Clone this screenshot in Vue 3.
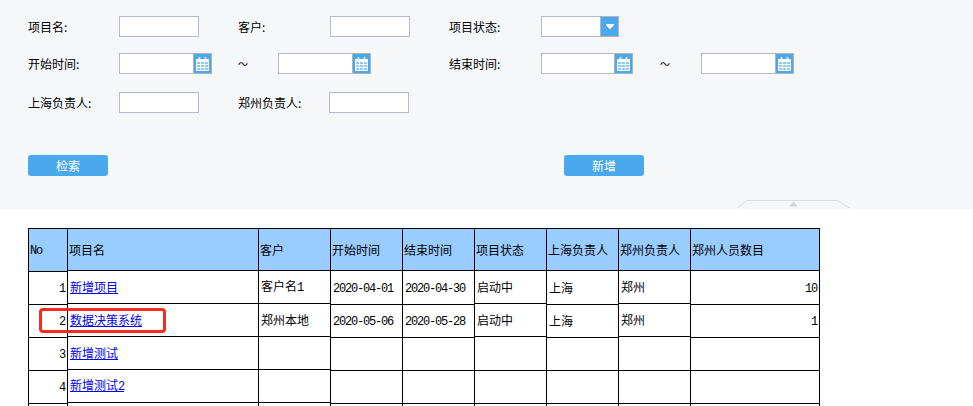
<script setup>
const rowsData = [
  ['1', '新增项目', '客户名1', '2020-04-01', '2020-04-30', '启动中', '上海', '郑州', '10'],
  ['2', '数据决策系统', '郑州本地', '2020-05-06', '2020-05-28', '启动中', '上海', '郑州', '1'],
  ['3', '新增测试', '', '', '', '', '', '', ''],
  ['4', '新增测试2', '', '', '', '', '', '', ''],
  ['', '', '', '', '', '', '', '', '']
]
const heads = [
  { title: 'No', width: 39, lines: [271, 304, 337, 370, 403], kind: 'num' },
  { title: '项目名', width: 191, lines: [270, 303, 336, 369, 402], kind: 'link' },
  { title: '客户', width: 72, lines: [270, 303, 336, 369, 402] },
  { title: '开始时间', width: 72, lines: [270, 304, 337, 370, 403] },
  { title: '结束时间', width: 72, lines: [270, 304, 337, 370, 403] },
  { title: '项目状态', width: 72, lines: [270, 303, 336, 370, 403] },
  { title: '上海负责人', width: 72, lines: [270, 304, 337, 370, 403] },
  { title: '郑州负责人', width: 72, lines: [270, 303, 336, 370, 403] },
  { title: '郑州人员数目', width: 130, lines: [270, 304, 337, 370, 403], kind: 'num', last: true }
]
const columns = heads.map((h, c) => {
  let start = 229
  const cells = [h.title, ...rowsData.map((r) => r[c])].map((text, i) => {
    const end = h.lines[i]
    const height = end === undefined ? 20 : end + 1 - start
    start = end === undefined ? start : end + 1
    return { text, height, isHead: i === 0, open: end === undefined }
  })
  return { ...h, cells }
})
const runs = (text) => text.match(/[\x00-\x7f]+|[^\x00-\x7f]+/g) || []
const isLatin = (t) => /^[\x00-\x7f]/.test(t)
</script>

<template>
  <div class="page">
    <section class="panel">
      <div class="row">
        <span class="label l91">项目名:</span>
        <span class="input after39"></span>
        <span class="label l92">客户:</span>
        <span class="input after39"></span>
        <span class="label l92">项目状态:</span>
        <span class="select">
          <span class="field"></span>
          <span class="drop">
            <svg width="10" height="6" viewBox="0 0 10 6"><path d="M1 0h8v1.5H8v1.2H7v1.2H6V5H4V3.9H3V2.7H2V1.5H1z" fill="#fff" /></svg>
          </span>
        </span>
      </div>
      <div class="row second">
        <span class="label l91">开始时间:</span>
        <span class="date after26">
          <span class="field"></span>
          <span class="cal"><svg width="13" height="14" viewBox="0 0 13 14"><path d="M0.5 2.5h12v11h-12z" fill="#8fc9f2" stroke="#fff" /><path d="M0 2h13v3H0z" fill="#fff" /><path d="M3.5 0v3M9.5 0v3" stroke="#fff" stroke-width="1.4" /><path d="M1 7.5h11M1 10.5h11M4.5 5v8M8.5 5v8" stroke="#fff" /></svg></span>
        </span>
        <span class="tilde t40">～</span>
        <span class="date after78">
          <span class="field"></span>
          <span class="cal"><svg width="13" height="14" viewBox="0 0 13 14"><path d="M0.5 2.5h12v11h-12z" fill="#8fc9f2" stroke="#fff" /><path d="M0 2h13v3H0z" fill="#fff" /><path d="M3.5 0v3M9.5 0v3" stroke="#fff" stroke-width="1.4" /><path d="M1 7.5h11M1 10.5h11M4.5 5v8M8.5 5v8" stroke="#fff" /></svg></span>
        </span>
        <span class="label l92">结束时间:</span>
        <span class="date narrow after27">
          <span class="field"></span>
          <span class="cal"><svg width="13" height="14" viewBox="0 0 13 14"><path d="M0.5 2.5h12v11h-12z" fill="#8fc9f2" stroke="#fff" /><path d="M0 2h13v3H0z" fill="#fff" /><path d="M3.5 0v3M9.5 0v3" stroke="#fff" stroke-width="1.4" /><path d="M1 7.5h11M1 10.5h11M4.5 5v8M8.5 5v8" stroke="#fff" /></svg></span>
        </span>
        <span class="tilde t41">～</span>
        <span class="date">
          <span class="field"></span>
          <span class="cal"><svg width="13" height="14" viewBox="0 0 13 14"><path d="M0.5 2.5h12v11h-12z" fill="#8fc9f2" stroke="#fff" /><path d="M0 2h13v3H0z" fill="#fff" /><path d="M3.5 0v3M9.5 0v3" stroke="#fff" stroke-width="1.4" /><path d="M1 7.5h11M1 10.5h11M4.5 5v8M8.5 5v8" stroke="#fff" /></svg></span>
        </span>
      </div>
      <div class="row third">
        <span class="label l91">上海负责人:</span>
        <span class="input after39"></span>
        <span class="label l91">郑州负责人:</span>
        <span class="input"></span>
      </div>
      <div class="actions">
        <button class="btn search">检索</button>
        <button class="btn">新增</button>
      </div>
      <svg class="collapse" width="116" height="9" viewBox="0 0 116 9">
        <path d="M0.5 8.5L11 0.5H102L114 8.5" fill="none" stroke="#dcdcdc" />
        <path d="M53 6.5L57.5 1.5L62 6.5z" fill="#d4d4d4" />
      </svg>
    </section>

    <div class="table">
      <div
        v-for="col in columns"
        :key="col.title"
        class="col"
        :class="{ last: col.last }"
        :style="{ width: col.width + 'px' }"
      >
        <div
          v-for="(cell, i) in col.cells"
          :key="i"
          class="cell"
          :class="{ head: cell.isHead, open: cell.open, right: col.kind === 'num' && !cell.isHead }"
          :style="{ height: cell.height + 'px' }"
        >
          <component :is="col.kind === 'link' && !cell.isHead && cell.text ? 'a' : 'span'" :href="col.kind === 'link' && !cell.isHead && cell.text ? '#' : undefined" class="txt">
            <template v-for="(r, j) in runs(cell.text)" :key="j"><span v-if="isLatin(r)" class="latin">{{ r }}</span><template v-else>{{ r }}</template></template>
          </component>
        </div>
      </div>
      <div class="mark"></div>
    </div>
  </div>
</template>

<style>
html, body {
  margin: 0;
  background: #fff;
  overflow: hidden;
}
</style>

<style scoped>
.page {
  width: 973px;
  height: 406px;
  overflow: hidden;
  font-family: "Noto Sans CJK SC", "Liberation Sans", sans-serif;
  font-size: 12px;
  color: #000;
}
.panel {
  position: relative;
  box-sizing: border-box;
  height: 209px;
  padding: 16px 0 0 28px;
  background: #f6f7f9;
}
.row {
  display: flex;
  align-items: center;
  height: 21px;
}
.second { margin-top: 16px; }
.third { margin-top: 18px; }
.label { display: block; line-height: 21px; }
.l91 { width: 91px; }
.l92 { width: 92px; }
.input, .field {
  display: block;
  box-sizing: border-box;
  height: 21px;
  background: #fff;
  border: 1px solid #b5bacd;
}
.input { width: 80px; }
.after39 { margin-right: 39px; }
.after26 { margin-right: 26px; }
.after27 { margin-right: 27px; }
.after78 { margin-right: 78px; }
.date, .select { display: flex; height: 21px; }
.date .field { width: 74px; border-right: 0; }
.date.narrow .field { width: 73px; }
.select .field { width: 59px; border-right: 0; }
.cal, .drop {
  display: flex;
  align-items: center;
  justify-content: center;
  box-sizing: border-box;
  width: 19px;
  height: 21px;
  background: #4aa9ec;
  border: 1px solid #b4b4b4;
}
.cal svg { display: block; }
.drop svg { display: block; }
.tilde { display: block; line-height: 21px; font-size: 10px; }
.t40 { width: 40px; }
.t41 { width: 41px; }
.actions {
  display: flex;
  margin-top: 42px;
}
.btn {
  width: 80px;
  height: 21px;
  padding: 0;
  border: 0;
  border-radius: 3px;
  background: #4aa9ec;
  color: #fff;
  font: inherit;
  line-height: 21px;
}
.search { margin-right: 456px; }
.collapse {
  position: absolute;
  left: 736px;
  top: 200px;
}
.table {
  position: relative;
  display: flex;
  width: 792px;
  margin: 19px 0 0 28px;
  border-top: 1px solid #000;
}
.col {
  box-sizing: border-box;
  flex: none;
  border-left: 1px solid #000;
}
.col.last {
  box-sizing: content-box;
  width: 128px !important;
  border-right: 1px solid #000;
}
.cell {
  box-sizing: border-box;
  display: flex;
  align-items: center;
  padding: 0 1px 0 2px;
  border-bottom: 1px solid #000;
  white-space: nowrap;
  overflow: hidden;
}
.cell.head { background: #99ccff; padding-left: 1px; }
.cell.open { border-bottom: 0; }
.cell.right { justify-content: flex-end; }
.txt { display: block; line-height: 16px; }
a.txt { color: #0000ee; text-decoration: underline; }
.latin {
  font-family: "Liberation Mono", monospace;
  font-size: 12px;
  letter-spacing: -1.2px;
  margin-right: 1px;
}
.mark {
  position: absolute;
  left: 11px;
  top: 79px;
  box-sizing: border-box;
  width: 127px;
  height: 25px;
  border: 3px solid #fb2a1e;
  border-radius: 4px;
  pointer-events: none;
}
</style>
